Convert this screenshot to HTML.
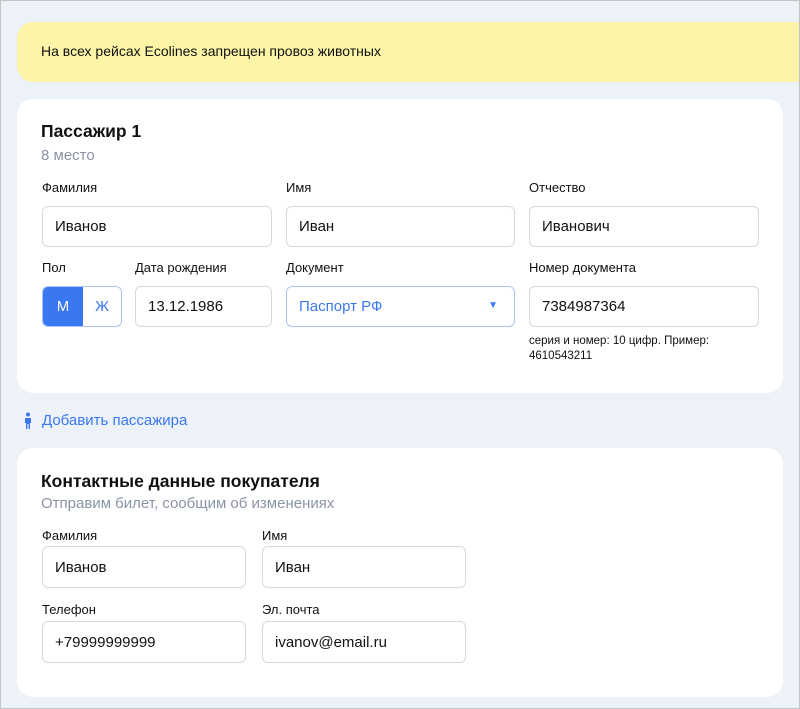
<!DOCTYPE html>
<html><head><meta charset="utf-8"><style>
*{box-sizing:border-box;margin:0;padding:0}
body{width:800px;height:709px;overflow:hidden;font-family:"Liberation Sans","Noto Sans CJK SC",sans-serif;color:#111}
.page{position:absolute;left:0;top:0;width:800px;height:709px;background:#edf2f9;border:1px solid #c4c4c4;overflow:hidden}
.a{position:absolute}
.banner{left:16px;top:21px;width:800px;height:60px;background:#fcf4a6;border-radius:16px 0 0 16px}
.card{background:#fff;border-radius:16px;left:16px;width:766px}
.lbl{font-size:13px;color:#111;line-height:16px}
.inp{border:1px solid #d6d8dc;border-radius:6px;background:#fff;font-size:15px;padding-left:12px;display:flex;align-items:center}
.t{font-weight:bold;font-size:17.5px}
.sub{color:#8a93a6;font-size:15px}
</style></head><body><div class="page">
<div class="a banner"></div>
<div class="a" style="left:40px;top:42px;font-size:14px">На всех рейсах Ecolines запрещен провоз животных</div>

<div class="a card" style="top:98px;height:294px"></div>
<div class="a t" style="left:40px;top:120px">Пассажир 1</div>
<div class="a sub" style="left:40px;top:146px">8 место</div>
<div class="a lbl" style="left:41px;top:179px">Фамилия</div>
<div class="a lbl" style="left:285px;top:179px">Имя</div>
<div class="a lbl" style="left:528px;top:179px">Отчество</div>
<div class="a inp" style="left:41px;top:205px;width:230px;height:41px">Иванов</div>
<div class="a inp" style="left:285px;top:205px;width:229px;height:41px">Иван</div>
<div class="a inp" style="left:528px;top:205px;width:230px;height:41px">Иванович</div>
<div class="a lbl" style="left:41px;top:259px">Пол</div>
<div class="a lbl" style="left:134px;top:259px">Дата рождения</div>
<div class="a lbl" style="left:285px;top:259px">Документ</div>
<div class="a lbl" style="left:528px;top:259px">Номер документа</div>
<div class="a" style="left:41px;top:285px;width:80px;height:41px;border:1px solid #a9c4f7;border-radius:6px;overflow:hidden;display:flex;font-size:15px">
<div style="width:40px;background:#3a78f2;color:#fff;display:flex;align-items:center;justify-content:center">М</div>
<div style="flex:1;color:#3a78f2;display:flex;align-items:center;justify-content:center">Ж</div></div>
<div class="a inp" style="left:134px;top:285px;width:137px;height:41px">13.12.1986</div>
<div class="a inp" style="left:285px;top:285px;width:229px;height:41px;border-color:#a9c4f7;color:#3a78f2">Паспорт РФ<span style="position:absolute;right:16px;font-size:10px;top:13px">▼</span></div>
<div class="a inp" style="left:528px;top:285px;width:230px;height:41px">7384987364</div>
<div class="a" style="left:528px;top:333px;font-size:11.5px;line-height:15px">серия и номер: 10 цифр. Пример:<br>4610543211</div>

<svg class="a" style="left:22px;top:411px" width="10" height="18" viewBox="0 0 10 18"><circle cx="5" cy="2.5" r="2" fill="#3a78f2"/><path d="M2 6h6v5H7v6H5.6v-5H4.4v5H3v-6H2z" fill="#3a78f2"/></svg>
<div class="a" style="left:41px;top:411px;font-size:15px;color:#3a78f2">Добавить пассажира</div>

<div class="a card" style="top:447px;height:249px"></div>
<div class="a t" style="left:40px;top:470px">Контактные данные покупателя</div>
<div class="a sub" style="left:40px;top:494px">Отправим билет, сообщим об изменениях</div>
<div class="a lbl" style="left:41px;top:527px">Фамилия</div>
<div class="a lbl" style="left:261px;top:527px">Имя</div>
<div class="a inp" style="left:41px;top:545px;width:204px;height:42px">Иванов</div>
<div class="a inp" style="left:261px;top:545px;width:204px;height:42px">Иван</div>
<div class="a lbl" style="left:41px;top:601px">Телефон</div>
<div class="a lbl" style="left:261px;top:601px">Эл. почта</div>
<div class="a inp" style="left:41px;top:620px;width:204px;height:42px">+79999999999</div>
<div class="a inp" style="left:261px;top:620px;width:204px;height:42px">ivanov@email.ru</div>
</div></body></html>
